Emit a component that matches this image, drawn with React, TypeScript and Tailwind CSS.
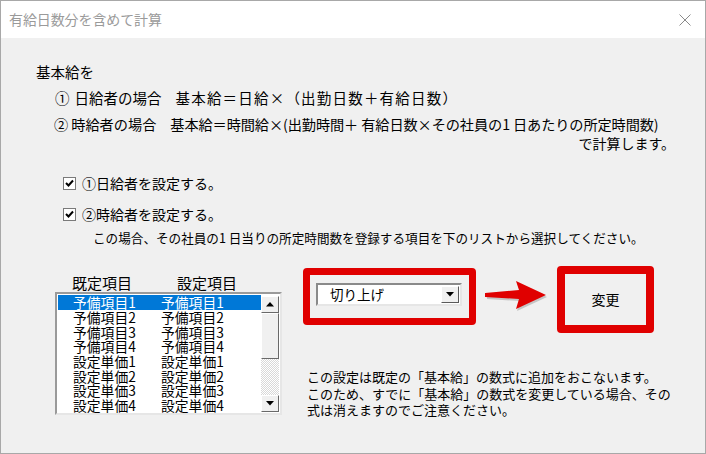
import React from "react";

const F = { fontFamily: '"Noto Sans CJK JP", "Noto Sans", sans-serif' };

function Check() {
  return (
    <div className="w-[13px] h-[13px] bg-white border border-[#7a7a7a] flex items-center justify-center">
      <svg width="9" height="9" viewBox="0 0 9 9">
        <path d="M1 4 L3.5 6.5 L8 1.5" stroke="#000" strokeWidth="2" fill="none" />
      </svg>
    </div>
  );
}

function ScrollBtn({ down }: { down?: boolean }) {
  return (
    <div className="w-[18px] h-[17px] bg-[#f0f0f0] border border-t-white border-l-white border-r-[#696969] border-b-[#696969] flex items-center justify-center">
      <svg width="8" height="5" viewBox="0 0 8 5">
        {down ? <polygon points="0,0 8,0 4,4.5" fill="#000" /> : <polygon points="0,4.5 8,4.5 4,0" fill="#000" />}
      </svg>
    </div>
  );
}

const rows = [
  ["予備項目1", "予備項目1"],
  ["予備項目2", "予備項目2"],
  ["予備項目3", "予備項目3"],
  ["予備項目4", "予備項目4"],
  ["設定単価1", "設定単価1"],
  ["設定単価2", "設定単価2"],
  ["設定単価3", "設定単価3"],
  ["設定単価4", "設定単価4"],
];

export default function App() {
  return (
    <div style={F} className="w-[706px] h-[454px] border border-[#a8a8a8] bg-[#f0f0f0] flex flex-col text-black overflow-hidden">
      <div className="h-[37px] bg-white flex items-center justify-between pl-[8px] pr-[14px]">
        <span className="text-[14px] text-[#9a9a9a] tracking-[-0.1px]">有給日数分を含めて計算</span>
        <svg width="12" height="12" viewBox="0 0 12 12">
          <path d="M0.5 0.5 L11.5 11.5 M11.5 0.5 L0.5 11.5" stroke="#8a8a8a" strokeWidth="1" />
        </svg>
      </div>
      <div className="flex flex-col pt-[25px] text-[14px]">
        <div className="h-[18px] flex items-center pl-[35px] text-[14.5px]">基本給を</div>
        <div className="h-[18px] mt-[8px] flex items-center pl-[54px] whitespace-pre text-[14.5px]">
          <span>①</span>
          <span className="ml-[5px]">日給者の場合</span>
          <span className="ml-[14px] tracking-[1.2px]">基本給＝日給×（出勤日数＋有給日数）</span>
        </div>
        <div className="h-[18px] mt-[9px] flex items-center pl-[53px] whitespace-pre text-[14.2px]">
          <span>②</span>
          <span className="ml-[3px]">時給者の場合</span>
          <span className="ml-[14px] tracking-[-0.1px]">基本給＝時間給×(出勤時間＋ 有給日数×その社員の1 日あたりの所定時間数)</span>
        </div>
        <div className="h-[18px] flex items-center justify-end pr-[30px] text-[14px]">で計算します。</div>
        <div className="h-[18px] mt-[22px] flex items-center pl-[62px] gap-[6px] text-[14px]">
          <Check />
          <span>①日給者を設定する。</span>
        </div>
        <div className="h-[18px] mt-[13px] flex items-center pl-[62px] gap-[6px] text-[14px]">
          <Check />
          <span>②時給者を設定する。</span>
        </div>
        <div className="h-[18px] mt-[6px] flex items-center pl-[92px] text-[12.6px] whitespace-pre">この場合、その社員の1 日当りの所定時間数を登録する項目を下のリストから選択してください。</div>
        <div className="flex mt-[19px] items-start">
          <div className="ml-[54px] w-[227px] flex flex-col mt-[8px]">
            <div className="h-[18px] flex items-center text-[15px]">
              <span className="ml-[17px] w-[105px]">既定項目</span>
              <span>設定項目</span>
            </div>
            <div className="h-[123px] bg-white border-2 border-t-[#9a9a9a] border-l-[#9a9a9a] border-r-[#e6e6e6] border-b-[#e6e6e6] flex text-[13.8px]">
              <div className="flex-1 flex flex-col pt-[1px] pl-[1px] overflow-hidden">
                {rows.map((r, i) => (
                  <div key={i} className={"h-[14.7px] shrink-0 flex items-center leading-[14px] " + (i === 0 ? "bg-[#0078d7] text-white" : "")}>
                    <span className="ml-[15px] w-[88px]">{r[0]}</span>
                    <span>{r[1]}</span>
                  </div>
                ))}
              </div>
              <div className="w-[19px] flex flex-col pt-[2px] pb-[1px] pr-[1px]">
                <ScrollBtn />
                <div className="h-[46px] bg-[#f0f0f0] border border-t-white border-l-white border-r-[#696969] border-b-[#696969]" />
                <div className="flex-1 bg-[repeating-conic-gradient(#d8d8d8_0%_25%,#ffffff_0%_50%)] bg-[length:2px_2px]" />
                <ScrollBtn down />
              </div>
            </div>
          </div>
          <div className="ml-[21px] flex flex-col">
            <div className="flex items-start">
              <div className="mt-[2px] w-[173px] h-[57px] border-[7px] border-[#e00000] rounded-[4px] flex pt-[8px] pl-[6px]">
                <div className="w-[146px] h-[23px] bg-white border-2 border-t-[#8a8a8a] border-l-[#8a8a8a] border-r-[#e6e6e6] border-b-[#e6e6e6] flex items-center justify-between pr-[1px]">
                  <span className="ml-[12px] text-[13.5px]">切り上げ</span>
                  <div className="w-[18px] h-[17px] bg-[#f0f0f0] border border-t-white border-l-white border-r-[#5a5a5a] border-b-[#5a5a5a] flex items-center justify-center">
                    <svg width="8" height="5" viewBox="0 0 8 5">
                      <polygon points="0,0 8,0 4,4.5" fill="#000" />
                    </svg>
                  </div>
                </div>
              </div>
              <svg className="ml-[9px] mt-[14px]" width="63" height="32" viewBox="0 0 63 32">
                <polygon points="2,15 35,12 32,3 62,17 32,31 35,21 2,19" fill="#9a9a9a" opacity="0.5" />
                <polygon points="0,13 34,10 31,1 61,15 31,29 34,19 0,17" fill="#e00000" />
              </svg>
              <div className="ml-[9px] w-[97px] h-[67px] border-[8px] border-[#e00000] rounded-[4px] flex items-center justify-center text-[14px]">
                変更
              </div>
            </div>
            <div className="mt-[36px] ml-[4px] text-[13px] leading-[16.5px] whitespace-nowrap">
              <div>この設定は既定の「基本給」の数式に追加をおこないます。</div>
              <div>このため、すでに「基本給」の数式を変更している場合、その</div>
              <div>式は消えますのでご注意ください。</div>
            </div>
          </div>
        </div>
      </div>
    </div>
  );
}
